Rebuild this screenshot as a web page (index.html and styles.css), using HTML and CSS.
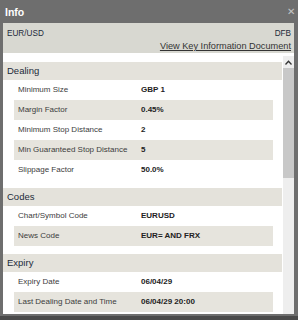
FILE: index.html
```html
<!DOCTYPE html>
<html lang="en">
<head>
    <meta charset="UTF-8">
    <title>Info</title>
    <link rel="stylesheet" href="styles.css">
</head>
<body>
    <div class="window">
        <div class="titlebar">
            <span class="title">Info</span>
            <span class="close">&#x2715;</span>
        </div>
        <div class="panel">
            <div class="market">
                <div class="market-row">
                    <span>EUR/USD</span>
                    <span>DFB</span>
                </div>
                <div class="market-link"><a href="#">View Key Information Document</a></div>
            </div>
            <div class="scroller">
                <div class="sections">
                    <div class="section">
                        <div class="section-title">Dealing</div>
                        <div class="row"><span class="label">Minimum Size</span><span class="value">GBP 1</span></div>
                        <div class="row shaded"><span class="label">Margin Factor</span><span class="value">0.45%</span></div>
                        <div class="row"><span class="label">Minimum Stop Distance</span><span class="value">2</span></div>
                        <div class="row shaded"><span class="label">Min Guaranteed Stop Distance</span><span class="value">5</span></div>
                        <div class="row"><span class="label">Slippage Factor</span><span class="value">50.0%</span></div>
                    </div>
                    <div class="section">
                        <div class="section-title">Codes</div>
                        <div class="row"><span class="label">Chart/Symbol Code</span><span class="value">EURUSD</span></div>
                        <div class="row shaded"><span class="label">News Code</span><span class="value">EUR= AND FRX</span></div>
                    </div>
                    <div class="section">
                        <div class="section-title">Expiry</div>
                        <div class="row"><span class="label">Expiry Date</span><span class="value">06/04/29</span></div>
                        <div class="row shaded"><span class="label">Last Dealing Date and Time</span><span class="value">06/04/29 20:00</span></div>
                    </div>
                </div>
                <div class="scrollbar">
                    <div class="scroll-arrow">
                        <svg width="7" height="5" viewBox="0 0 7 5"><path d="M0.5 4.5 L3.5 1.2 L6.5 4.5" fill="none" stroke="#333" stroke-width="1.3"/></svg>
                    </div>
                    <div class="scroll-thumb"></div>
                </div>
            </div>
        </div>
    </div>
</body>
</html>
```

FILE: styles.css
```css
body {
    margin: 0;
    font-family: "Liberation Sans", Arial, sans-serif;
}
.window {
    width: 298px;
    height: 320px;
    background: #6e6e6e;
    box-sizing: border-box;
    border-bottom: 4px solid #4a4a4a;
    display: flex;
    flex-direction: column;
    overflow: hidden;
}
.titlebar {
    height: 23px;
    flex: none;
    display: flex;
    align-items: center;
    justify-content: space-between;
    padding: 0 3px 0 5px;
}
.title {
    color: #fff;
    font-weight: bold;
    font-size: 10.5px;
}
.close {
    color: #c4c4c4;
    font-size: 10px;
}
.panel {
    margin: 0 4px 0 3px;
    height: 291px;
    background: #fff;
    display: flex;
    flex-direction: column;
}
.market {
    height: 30px;
    flex: none;
    background: #d8d8d1;
    padding: 4px 3px 0 4px;
    box-sizing: border-box;
    color: #1e2b3c;
    font-size: 8.2px;
}
.market-row {
    display: flex;
    justify-content: space-between;
    height: 13px;
    line-height: 13px;
}
.market-link {
    text-align: right;
    font-size: 9.2px;
    line-height: 13px;
}
.market-link a {
    color: #333;
}
.scroller {
    flex: 1;
    margin-top: 2px;
    display: flex;
    overflow: hidden;
}
.sections {
    flex: 1;
    padding-top: 7px;
}
.section + .section {
    margin-top: 8px;
}
.section-title {
    height: 18px;
    line-height: 18px;
    margin-right: 1px;
    padding-left: 4px;
    background: #e4e2db;
    color: #1c2a3a;
    font-size: 9.5px;
}
.row {
    display: flex;
    height: 20px;
    line-height: 20px;
    margin: 0 10px 0 11px;
    font-size: 8px;
}
.row.shaded {
    background: #e6e4dd;
}
.label {
    width: 123px;
    padding-left: 4px;
    color: #3c3c3c;
}
.value {
    font-weight: bold;
    color: #222;
}
.scrollbar {
    width: 11px;
    background: #eeeeee;
    margin-top: 1px;
    flex: none;
}
.scroll-arrow {
    height: 12px;
    display: flex;
    align-items: center;
    justify-content: center;
}
.scroll-thumb {
    height: 110px;
    background: #c8c8c8;
}
```
